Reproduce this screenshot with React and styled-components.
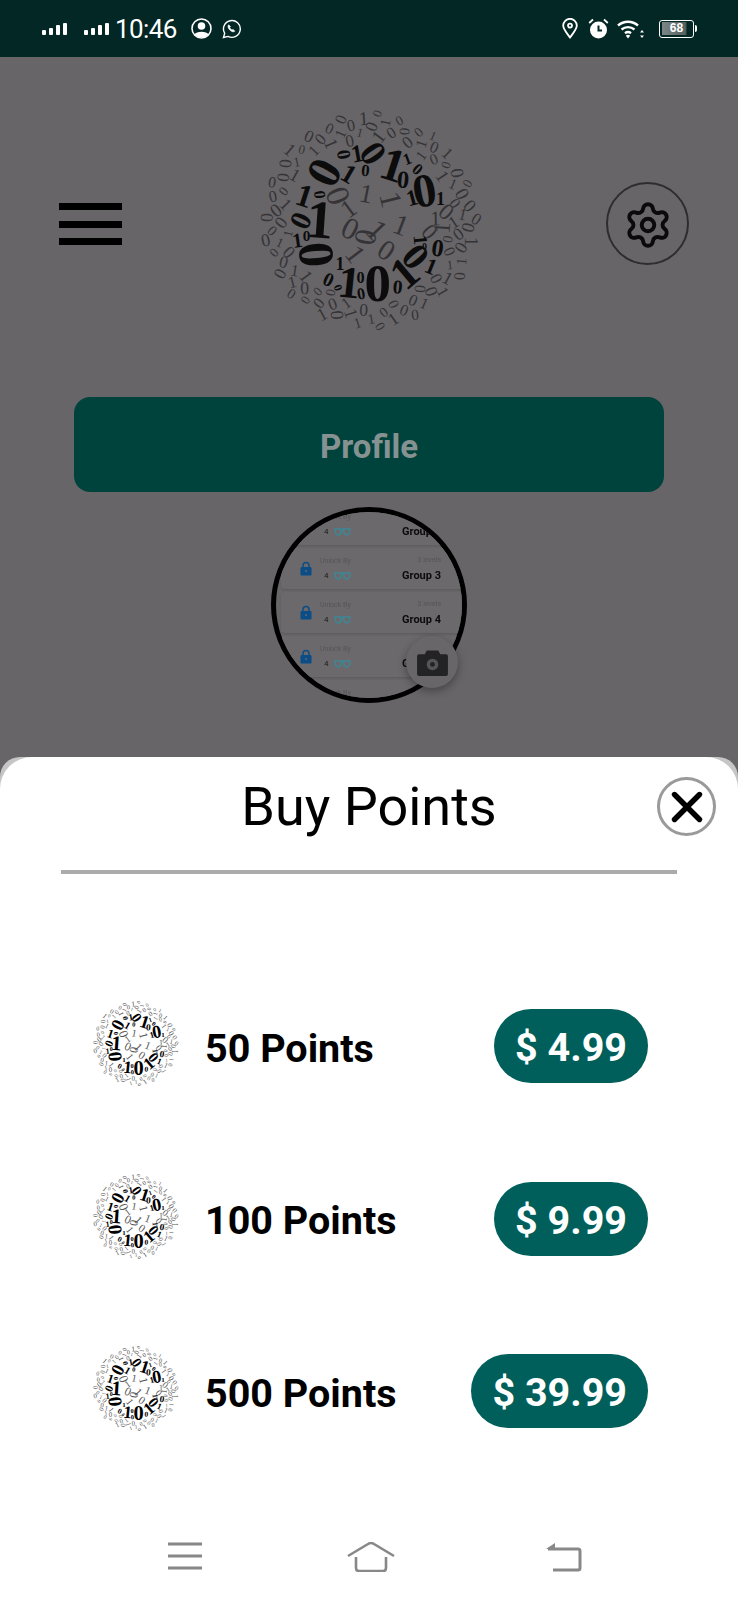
import React from 'react';
import styled, { createGlobalStyle } from 'styled-components';
import { Settings, X } from 'lucide-react';

const GlobalStyle = createGlobalStyle`
    html, body {
        margin: 0;
        padding: 0;
        background: #fff;
    }
    * {
        box-sizing: border-box;
    }
`;

const Screen = styled.div`
    width: 738px;
    height: 1600px;
    display: flex;
    flex-direction: column;
    overflow: hidden;
    font-family: Roboto, 'Liberation Sans', sans-serif;
    background: #676568;
`;

/* ---------- status bar ---------- */

const StatusBar = styled.div`
    height: 57px;
    flex: none;
    background: #022725;
    color: #fff;
    display: flex;
    align-items: center;
    justify-content: space-between;
    padding: 0 44px 0 42px;
`;

const StatusGroup = styled.div`
    display: flex;
    align-items: center;
    gap: ${(props) => props.$gap}px;
`;

const Time = styled.span`
    font-size: 26px;
    letter-spacing: -0.6px;
    line-height: 1;
    margin: 0 4px 0 -5px;
`;

const SignalSlot = styled.span`
    display: flex;
    margin-right: 6px;
`;

const WifiSlot = styled.span`
    display: flex;
    margin: 0 4px 0 -2px;
`;

const Battery = styled.div`
    width: 35px;
    height: 18px;
    border: 1.5px solid #fff;
    border-radius: 3px;
    padding: 1.5px;
    position: relative;
    &::after {
        content: '';
        position: absolute;
        right: -4px;
        top: 4px;
        width: 2px;
        height: 7px;
        background: #fff;
        border-radius: 0 2px 2px 0;
    }
`;

const BatteryFill = styled.div`
    height: 100%;
    width: 100%;
    font-family: 'Liberation Sans', sans-serif;
    font-size: 12px;
    font-weight: 700;
    line-height: 12px;
    text-align: center;
    background: linear-gradient(90deg, #7d8685 0, #56625f 78%, #022725 84%);
`;

function Signal() {
    return (
        <svg width="26" height="12" viewBox="0 0 26 12" fill="#fff">
            <rect x="0" y="7" width="4" height="5" rx="1" />
            <rect x="7" y="5" width="4" height="7" rx="1" />
            <rect x="14" y="2" width="4" height="10" rx="1" />
            <rect x="21" y="0" width="4" height="12" rx="1" />
        </svg>
    );
}

function PersonIcon() {
    return (
        <svg width="21" height="21" viewBox="0 0 21 21">
            <circle cx="10.5" cy="10.5" r="9.5" fill="none" stroke="#fff" strokeWidth="1.6" />
            <circle cx="10.5" cy="8" r="3.8" fill="#fff" />
            <path d="M3.5 16.5C5 12.8 16 12.8 17.5 16.5A9.5 9.5 0 0 1 3.5 16.5Z" fill="#fff" />
        </svg>
    );
}

function WhatsappIcon() {
    return (
        <svg width="19" height="20" viewBox="0 0 19 20" fill="none" stroke="#fff" strokeWidth="1.4">
            <path d="M1.5 18.5l1.2-4.2A8.4 8.4 0 1 1 6 17.4Z" />
            <path d="M6.6 5.8c-1.3 1.4-.4 3.6 1.2 5.2s3.6 2.4 5 1.2l-1.6-1.8-1.2.6c-1-.4-1.9-1.4-2.3-2.4l.8-1.1Z" fill="#fff" strokeWidth="0.6" />
        </svg>
    );
}

function PinIcon() {
    return (
        <svg width="16" height="21" viewBox="0 0 16 21" fill="none" stroke="#fff" strokeWidth="1.8">
            <path d="M8 19.5C4.5 14.5 1.2 11.4 1.2 7.6a6.8 6.8 0 0 1 13.6 0c0 3.8-3.3 6.9-6.8 11.9Z" />
            <circle cx="8" cy="7.6" r="2" />
        </svg>
    );
}

function AlarmIcon() {
    return (
        <svg width="21" height="21" viewBox="0 0 21 21">
            <circle cx="10.5" cy="12" r="8.5" fill="#fff" />
            <path d="M10.5 7.5v5h3.5" fill="none" stroke="#022725" strokeWidth="2" />
            <path d="M1.2 5L5 1.5M19.8 5L16 1.5" stroke="#fff" strokeWidth="1.8" />
        </svg>
    );
}

function WifiIcon() {
    return (
        <svg width="28" height="20" viewBox="0 0 28 20" fill="none" stroke="#fff" strokeWidth="2.4">
            <path d="M1 6.5a15 15 0 0 1 20 0" />
            <path d="M4.5 10.5a10 10 0 0 1 13 0" />
            <path d="M8 14.2a5 5 0 0 1 6 0" />
            <path d="M11 19.5l-2.2-2.8a3.6 3.6 0 0 1 4.4 0Z" fill="#fff" stroke="none" />
            <path d="M25 11l-2 2.5h4ZM25 19l-2-2.5h4Z" fill="#fff" stroke="none" />
        </svg>
    );
}

/* ---------- binary logo ---------- */

const BIG = 1.35;

const bigDigits = [
    ['0', 250, 245, 105, -62],
    ['0', 310, 192, 42, 80],
    ['1', 350, 188, 55, -10],
    ['0', 398, 188, 82, 55],
    ['1', 458, 222, 105, 18],
    ['1', 500, 205, 36, -20],
    ['0', 532, 236, 36, 40],
    ['0', 488, 266, 55, 5],
    ['0', 552, 300, 105, -10],
    ['1', 515, 322, 50, -15],
    ['1', 600, 325, 40, 0],
    ['1', 325, 250, 60, 30],
    ['0', 375, 240, 38, 5],
    ['1', 192, 315, 72, 18],
    ['0', 238, 312, 36, 85],
    ['1', 238, 388, 120, 4],
    ['0', 180, 390, 66, -65],
    ['0', 198, 434, 34, 0],
    ['1', 170, 450, 46, -8],
    ['0', 228, 492, 112, 85],
    ['1', 298, 522, 40, 0],
    ['0', 264, 568, 44, 25],
    ['0', 292, 592, 26, 70],
    ['1', 326, 576, 100, 6],
    ['0', 360, 560, 36, 0],
    ['0', 362, 610, 36, -10],
    ['0', 412, 578, 118, 0],
    ['0', 472, 590, 44, 5],
    ['1', 492, 548, 100, -40],
    ['0', 526, 498, 86, 50],
    ['1', 540, 448, 44, 85],
    ['0', 592, 472, 54, 8],
    ['1', 572, 528, 50, 22],
    ['0', 552, 468, 22, 0],
].map(([ch, x, y, s, rot]) => [ch, x, y, Math.round(s * BIG), rot]);

// seeded so the cloud comes out the same on every render
function makeSmallDigits() {
    let seed = 7;
    const rand = () => {
        seed = (seed * 16807) % 2147483647;
        return seed / 2147483647;
    };
    const out = [];
    for (let i = 1; i < 300; i++) {
        const r = 21 * Math.sqrt(i);
        const a = i * 2.39996;
        if (r > 322) break;
        const x = 387 + r * Math.cos(a);
        const y = 390 + r * Math.sin(a);
        const pick = rand();
        const size = r < 150 ? 72 + rand() * 30 : r < 240 ? 54 + rand() * 22 : 38 + rand() * 20;
        const rot = rand() * 180 - 90;
        const near = bigDigits.some(([, bx, by, s]) => Math.hypot(bx - x, by - y) < s * 0.36 + size * 0.2);
        // the middle of the cloud is loose, the rim is packed
        if (near || (r < 170 && i % 3 !== 0)) continue;
        out.push([pick > 0.42 ? '0' : '1', Math.round(x), Math.round(y), Math.round(size), Math.round(rot)]);
    }
    return out;
}

const smallDigits = makeSmallDigits();

const LogoDigit = styled.text`
    font-family: 'Liberation Serif', serif;
    font-weight: ${(props) => (props.$big ? 700 : 400)};
    fill: ${(props) => (props.$big ? props.$ink : props.$soft)};
    text-anchor: middle;
    dominant-baseline: central;
`;

function BinaryLogo({ size, ink, soft }) {
    const digit = (big) => ([ch, x, y, s, rot], i) => (
        <LogoDigit
            key={i}
            $big={big}
            $ink={ink}
            $soft={soft}
            x={x}
            y={y}
            fontSize={s}
            transform={`rotate(${rot} ${x} ${y})`}
        >
            {ch}
        </LogoDigit>
    );
    return (
        <svg width={size} height={size} viewBox="49 52 676 676">
            {smallDigits.map(digit(false))}
            {bigDigits.map(digit(true))}
        </svg>
    );
}

/* ---------- page behind the sheet ---------- */

const Backdrop = styled.div`
    height: 700px;
    flex: none;
    display: flex;
    flex-direction: column;
    align-items: center;
`;

const Header = styled.div`
    width: 100%;
    padding: 51px 49px 0 49px;
    height: 340px;
    flex: none;
    display: grid;
    grid-template-columns: 1fr auto 1fr;
`;

const MenuButton = styled.div`
    width: 63px;
    height: 42px;
    margin: 95px 0 0 10px;
    display: flex;
    flex-direction: column;
    justify-content: space-between;
`;

const MenuBar = styled.span`
    height: 7px;
    background: #000;
`;

const GearButton = styled.div`
    justify-self: end;
    width: 83px;
    height: 83px;
    margin-top: 74px;
    padding-top: 2px;
    border-radius: 50%;
    border: 2px solid #2e2c2f;
    display: flex;
    align-items: center;
    justify-content: center;
    color: #0a0a0a;
`;

const ProfileBar = styled.div`
    width: 590px;
    height: 95px;
    padding-top: 4px;
    border-radius: 16px;
    background: #00433d;
    color: #869291;
    font-size: 33px;
    font-weight: 700;
    display: flex;
    align-items: center;
    justify-content: center;
`;

const AvatarWrap = styled.div`
    width: 196px;
    height: 196px;
    margin-top: 15px;
    position: relative;
`;

const Avatar = styled.div`
    width: 100%;
    height: 100%;
    border-radius: 50%;
    border: 5px solid #000;
    background: #686669;
    overflow: hidden;
`;

const MiniList = styled.div`
    margin-top: -8px;
    display: flex;
    flex-direction: column;
    gap: 3px;
    filter: blur(0.6px);
`;

const MiniRow = styled.div`
    height: 41px;
    flex: none;
    margin: 0 -1px 0 5px;
    padding: 0 22px 0 19px;
    border-radius: 4px;
    background: #6b696c;
    box-shadow: 0 1px 2px rgba(0, 0, 0, 0.12);
    display: grid;
    grid-template-columns: 12px 1fr auto;
    column-gap: 8px;
    align-items: center;
`;

const MiniCol = styled.div`
    display: flex;
    flex-direction: column;
    gap: 6px;
    align-items: ${(props) => (props.$end ? 'flex-end' : 'flex-start')};
`;

const MiniFaint = styled.span`
    font-size: 7px;
    line-height: 8px;
    color: #565457;
`;

const MiniLocks = styled.span`
    display: flex;
    align-items: center;
    gap: 5px;
    font-size: 8px;
    line-height: 9px;
    margin-left: 4px;
    color: #1c1c1c;
`;

const MiniGroup = styled.span`
    font-size: 11px;
    font-weight: 700;
    line-height: 11px;
    color: #0c0c0c;
    white-space: nowrap;
`;

const CameraBadge = styled.div`
    position: absolute;
    left: 135px;
    top: 129px;
    width: 52px;
    height: 52px;
    border-radius: 50%;
    background: #686669;
    box-shadow: 0 3px 9px rgba(0, 0, 0, 0.35);
    display: flex;
    align-items: center;
    justify-content: center;
`;

function LockIcon() {
    return (
        <svg width="12" height="15" viewBox="0 0 12 15">
            <path d="M3 7V4.5a3 3 0 0 1 6 0V7" fill="none" stroke="#0b4d86" strokeWidth="1.5" />
            <rect x="0.5" y="6" width="11" height="8.5" rx="1.2" fill="#0b4d86" />
            <circle cx="6" cy="10" r="1" fill="#686669" />
        </svg>
    );
}

function GlassesIcon() {
    return (
        <svg width="17" height="8" viewBox="0 0 17 8" fill="none" stroke="#3f8695" strokeWidth="1.5">
            <path d="M1 1h6.5L7 5 5 7H3.5L1.5 5Z" />
            <path d="M16 1H9.5L10 5l2 2h1.5l2-2Z" />
            <path d="M7.5 2h2" />
        </svg>
    );
}

function CameraIcon() {
    return (
        <svg width="31" height="27" viewBox="0 0 32 28">
            <path d="M10 1.5h12l2 4h6a2 2 0 0 1 2 2V26a2 2 0 0 1-2 2H2a2 2 0 0 1-2-2V7.5a2 2 0 0 1 2-2h6Z" fill="#232224" />
            <circle cx="16" cy="16" r="6" fill="#565457" />
            <circle cx="16" cy="16" r="2.5" fill="#232224" />
        </svg>
    );
}

function MiniGroupRow({ name }) {
    return (
        <MiniRow>
            <LockIcon />
            <MiniCol>
                <MiniFaint>Unlock By</MiniFaint>
                <MiniLocks>
                    4 <GlassesIcon />
                </MiniLocks>
            </MiniCol>
            <MiniCol $end>
                <MiniFaint>3 levels</MiniFaint>
                <MiniGroup>{name}</MiniGroup>
            </MiniCol>
        </MiniRow>
    );
}

/* ---------- buy points sheet ---------- */

const Sheet = styled.div`
    height: 756px;
    flex: none;
    border-radius: 20px 20px 0 0;
    background: linear-gradient(#c6c6c6 0 40px, #fff 40px);
`;

const SheetBody = styled.div`
    height: 100%;
    background: #fff;
    border-radius: 32px 32px 0 0;
    display: flex;
    flex-direction: column;
`;

const SheetHead = styled.div`
    height: 117px;
    flex: none;
    margin: 0 61px;
    border-bottom: 4px solid #ababab;
    display: grid;
    grid-template-columns: 1fr auto 1fr;
`;

const SheetTitle = styled.h1`
    grid-column: 2;
    margin: 16px 0 0;
    font-size: 54px;
    font-weight: 400;
    line-height: 68px;
    color: #000;
`;

const CloseButton = styled.div`
    grid-column: 3;
    justify-self: end;
    width: 59px;
    height: 59px;
    margin: 20px -39px 0 0;
    border-radius: 50%;
    border: 3px solid #9a9a9a;
    display: flex;
    align-items: center;
    justify-content: center;
    color: #000;
`;

const Offers = styled.div`
    padding: 135px 90px 0 92px;
    display: flex;
    flex-direction: column;
    gap: 98.5px;
`;

const Offer = styled.div`
    height: 74px;
    display: flex;
    align-items: center;
`;

const OfferLogo = styled.div`
    display: flex;
    margin-bottom: 5px;
`;

const OfferName = styled.div`
    margin: 4px 0 0 26px;
    flex: 1;
    font-size: 39.5px;
    font-weight: 700;
    color: #000;
`;

const PricePill = styled.div`
    height: 74px;
    padding: 3px 21px 0;
    border-radius: 37px;
    background: #005f5a;
    color: #fff;
    font-size: 39.5px;
    font-weight: 700;
    display: flex;
    align-items: center;
`;

/* ---------- nav bar ---------- */

const NavBar = styled.div`
    height: 87px;
    flex: none;
    background: #fff;
    display: flex;
    gap: 144px;
    padding: 29px 0 0 168px;
    align-items: flex-start;
`;

const NavBackSlot = styled.div`
    display: flex;
    margin-left: 7px;
`;

function NavMenu() {
    return (
        <svg width="35" height="28" viewBox="0 0 35 28" stroke="#888" strokeWidth="3">
            <path d="M0 2h34M0 14h34M0 26h34" />
        </svg>
    );
}

function NavHome() {
    return (
        <svg width="48" height="30" viewBox="0 0 48 30" fill="none" stroke="#888" strokeWidth="2.6">
            <path d="M1 14L21 2q3-2 6 0l20 12" />
            <path d="M9 15v11q0 3 3 3h24q3 0 3-3V15" />
        </svg>
    );
}

function NavBack() {
    return (
        <svg width="36" height="30" viewBox="0 0 36 30" fill="none" stroke="#888" strokeWidth="3">
            <path d="M2 7h30q2 0 2 2v17q0 2-2 2H7" />
            <path d="M0 7l9-6v6Z" fill="#888" stroke="none" />
        </svg>
    );
}

const offers = [
    { points: '50 Points', price: '$ 4.99' },
    { points: '100 Points', price: '$ 9.99' },
    { points: '500 Points', price: '$ 39.99' },
];

export default function App() {
    return (
        <Screen>
            <GlobalStyle />
            <StatusBar>
                <StatusGroup $gap={10}>
                    <SignalSlot>
                        <Signal />
                    </SignalSlot>
                    <Signal />
                    <Time>10:46</Time>
                    <PersonIcon />
                    <WhatsappIcon />
                </StatusGroup>
                <StatusGroup $gap={10}>
                    <PinIcon />
                    <AlarmIcon />
                    <WifiSlot>
                        <WifiIcon />
                    </WifiSlot>
                    <Battery>
                        <BatteryFill>68</BatteryFill>
                    </Battery>
                </StatusGroup>
            </StatusBar>
            <Backdrop>
                <Header>
                    <MenuButton>
                        <MenuBar />
                        <MenuBar />
                        <MenuBar />
                    </MenuButton>
                    <BinaryLogo size={225} ink="#0c0c0c" soft="#353336" />
                    <GearButton>
                        <Settings size={50} strokeWidth={1.9} />
                    </GearButton>
                </Header>
                <ProfileBar>Profile</ProfileBar>
                <AvatarWrap>
                    <Avatar>
                        <MiniList>
                            <MiniGroupRow name="Group 2" />
                            <MiniGroupRow name="Group 3" />
                            <MiniGroupRow name="Group 4" />
                            <MiniGroupRow name="Group 5" />
                            <MiniGroupRow name="Group 6" />
                        </MiniList>
                    </Avatar>
                    <CameraBadge>
                        <CameraIcon />
                    </CameraBadge>
                </AvatarWrap>
            </Backdrop>
            <Sheet>
                <SheetBody>
                    <SheetHead>
                        <SheetTitle>Buy Points</SheetTitle>
                        <CloseButton>
                            <X size={50} strokeWidth={2.6} />
                        </CloseButton>
                    </SheetHead>
                    <Offers>
                        {offers.map((offer) => (
                            <Offer key={offer.points}>
                                <OfferLogo>
                                    <BinaryLogo size={87} ink="#000" soft="#555" />
                                </OfferLogo>
                                <OfferName>{offer.points}</OfferName>
                                <PricePill>{offer.price}</PricePill>
                            </Offer>
                        ))}
                    </Offers>
                </SheetBody>
            </Sheet>
            <NavBar>
                <NavMenu />
                <NavHome />
                <NavBackSlot>
                    <NavBack />
                </NavBackSlot>
            </NavBar>
        </Screen>
    );
}
